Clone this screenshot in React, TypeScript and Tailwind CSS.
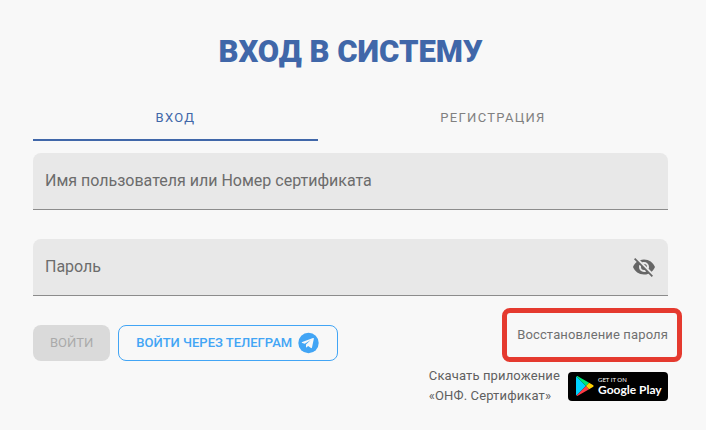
import { useState } from 'react';

type Tab = 'login' | 'register';

const TABS: { id: Tab; label: string; width: string }[] = [
  { id: 'login', label: 'ВХОД', width: 'w-[285px] shrink-0' },
  { id: 'register', label: 'РЕГИСТРАЦИЯ', width: 'flex-1' },
];

function TelegramIcon() {
  return (
    <svg viewBox="0 0 24 24" className="w-6 h-6" aria-hidden="true">
      <circle cx="12.5" cy="12" r="10.2" fill="#42a5f5" />
      <path
        fill="#f8f8f8"
        d="M17.9 7.500 16 16.600c-.1.600-.6.700-1 .4l-2.900-2.100-1.400 1.400c-.3.300-.7.200-.7-.3v-2.500l4.700-4.400-5.900 3.700-2.600-.8c-.6-.2-.6-.7.1-1L17 7c.6-.2 1 0 .9.500z"
      />
    </svg>
  );
}

function EyeOffIcon() {
  return (
    <svg viewBox="0 0 24 24" className="w-6 h-6" fill="currentColor" aria-hidden="true">
      <path d="M11.83 9 15 12.16V12a3 3 0 0 0-3-3h-.17m-4.3.8 1.55 1.55c-.05.21-.08.42-.08.65a3 3 0 0 0 3 3c.22 0 .44-.03.65-.08l1.55 1.55c-.67.33-1.41.53-2.2.53a5 5 0 0 1-5-5c0-.79.2-1.53.53-2.2M2 4.27l2.28 2.28.45.45C3.08 8.3 1.78 10 1 12c1.73 4.39 6 7.5 11 7.5 1.55 0 3.03-.3 4.38-.84l.43.42L19.73 22 21 20.73 3.27 3M12 7a5 5 0 0 1 5 5c0 .64-.13 1.26-.36 1.82l2.93 2.93c1.5-1.25 2.7-2.89 3.43-4.75-1.73-4.39-6-7.5-11-7.5-1.4 0-2.74.25-4 .7l2.17 2.15C10.74 7.13 11.35 7 12 7z" />
    </svg>
  );
}

function PlayIcon() {
  return (
    <svg viewBox="0 0 18 20" className="w-[18px] h-5" aria-hidden="true">
      <path fill="#00d2ff" d="M.6.4C.2.7 0 1.1 0 1.700v16.600c0 .6.2 1 .6 1.300L10 10z" />
      <path fill="#00e676" d="M.6.4c.4-.4 1-.4 1.600 0l10.900 6.400L10 10z" />
      <path fill="#ff3a44" d="M.6 19.600c.4.4 1 .4 1.600 0l10.900-6.400L10 10z" />
      <path fill="#ffd000" d="M13.100 6.800 16.900 9c1 .6 1 1.400 0 2l-3.800 2.200L10 10z" />
    </svg>
  );
}

const fieldCls = 'relative h-[57px] rounded-t-lg bg-[#e8e8e8] border-b border-[#8c8c8c] flex items-center';
const inputCls = 'peer h-full flex-1 min-w-0 bg-transparent px-3 pt-3 text-base text-[#333] outline-none';
const labelCls = 'absolute left-3 top-4 text-base leading-6 text-[#6c6c6c] pointer-events-none peer-focus:top-1 peer-focus:text-xs peer-[:not(:placeholder-shown)]:top-1 peer-[:not(:placeholder-shown)]:text-xs';

export default function App() {
  const [tab, setTab] = useState<Tab>('login');
  const [login, setLogin] = useState('');
  const [password, setPassword] = useState('');
  const [visible, setVisible] = useState(false);

  const canSubmit = login !== '' && password !== '';

  return (
    <main className="min-h-screen bg-[#f8f8f8] pl-[33px] pr-[38px] pt-8 pb-6 font-['Roboto',sans-serif]">
      <h1 className="text-center text-[31px] leading-10 font-black text-[#4067a9]">ВХОД В СИСТЕМУ</h1>

      <div role="tablist" className="mt-[21px] flex">
        {TABS.map(t => (
          <button
            key={t.id}
            type="button"
            role="tab"
            aria-selected={tab === t.id}
            onClick={() => setTab(t.id)}
            className={`h-12 pt-1 border-b-2 text-[13px] tracking-widest ${t.width} ${tab === t.id ? 'border-[#4067a9] text-[#4067a9]' : 'border-transparent text-[#808080]'}`}
          >
            {t.label}
          </button>
        ))}
      </div>

      <form className="mt-3" onSubmit={e => e.preventDefault()}>
        <div className={fieldCls}>
          <input id="login" className={inputCls} placeholder=" " value={login} onChange={e => setLogin(e.target.value)} />
          <label htmlFor="login" className={labelCls}>Имя пользователя или Номер сертификата</label>
        </div>

        <div className={`${fieldCls} mt-[29px]`}>
          <input
            id="password"
            type={visible ? 'text' : 'password'}
            className={inputCls}
            placeholder=" "
            value={password}
            onChange={e => setPassword(e.target.value)}
          />
          <label htmlFor="password" className={labelCls}>Пароль</label>
          <button type="button" aria-label="Показать пароль" onClick={() => setVisible(!visible)} className="mr-3 text-[#666]">
            <EyeOffIcon />
          </button>
        </div>

        <div className="mt-[29px] flex items-start justify-between">
          <div className="flex gap-2">
            <button type="submit" disabled={!canSubmit} className="h-9 px-[17px] rounded-lg bg-[#4067a9] text-[13px] text-white disabled:bg-[#dadada] disabled:text-[#aaa]">
              ВОЙТИ
            </button>
            <button type="button" className="h-9 px-[17px] rounded-lg border border-[#42a5f5] flex items-center gap-1 text-[13px] font-medium text-[#42a5f5]">
              ВОЙТИ ЧЕРЕЗ ТЕЛЕГРАМ
              <TelegramIcon />
            </button>
          </div>

          <div className="flex flex-col items-end gap-[21px] text-[13px] leading-5 tracking-[0.01em] text-[#606060]">
            <a href="#" className="relative text-[#707070]">
              Восстановление пароля
              <span className="absolute -left-[15px] -right-[14px] -inset-y-[17px] rounded-lg border-[5px] border-[#e53a2f]" />
            </a>
            <div className="flex items-center gap-2">
              <p>
                Скачать приложение
                <br />
                «ОНФ. Сертификат»
              </p>
              <a href="#" className="w-[100px] h-[29px] rounded bg-black flex items-center gap-1 pl-2 font-['Lato',sans-serif] tracking-normal text-white">
                <PlayIcon />
                <span className="flex flex-col whitespace-nowrap">
                  <span className="text-[6px] leading-[7px]">GET IT ON</span>
                  <span className="text-[12px] leading-[14px] font-bold">Google Play</span>
                </span>
              </a>
            </div>
          </div>
        </div>
      </form>
    </main>
  );
}
